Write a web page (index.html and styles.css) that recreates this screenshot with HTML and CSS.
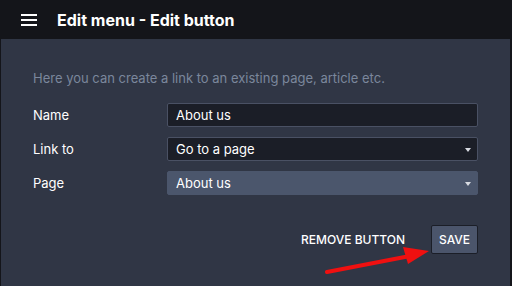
FILE: index.html
```html
<!DOCTYPE html>
<html lang="en">
<head>
  <meta charset="UTF-8">
  <title>Edit button</title>
  <link rel="stylesheet" href="styles.css">
</head>
<body>
  <header class="topbar">
    <span class="burger"><i></i><i></i><i></i></span>
    <h1 class="title">Edit menu - Edit button</h1>
  </header>

  <main class="panel">
    <p class="hint">Here you can create a link to an existing page, article etc.</p>

    <div class="row">
      <label class="label">Name</label>
      <div class="field">About us</div>
    </div>
    <div class="row">
      <label class="label">Link to</label>
      <div class="field select">Go to a page</div>
    </div>
    <div class="row">
      <label class="label">Page</label>
      <div class="field select light">About us</div>
    </div>

    <div class="actions">
      <button class="btn-text">REMOVE BUTTON</button>
      <button class="btn-save">SAVE</button>
    </div>

    <!-- annotation arrow -->
    <svg class="arrow" width="512" height="286" viewBox="0 0 512 286">
      <line x1="327" y1="272" x2="410" y2="256" stroke="#f01010" stroke-width="4" stroke-linecap="round"/>
      <polygon points="429,251 403,247 408,264" fill="#f01010"/>
    </svg>
  </main>
</body>
</html>
```

FILE: styles.css
```css
html, body{
  margin: 0;
  height: 100%;
  background: #14151a;
}
body{
  font-family: Inter, "Noto Sans", sans-serif;
  color: #fff;
  overflow: hidden;
}
.topbar{
  height: 39px;
  display: flex;
  align-items: center;
  padding-left: 21px;
  background: #14151a;
}
.burger{
  display: flex;
  flex-direction: column;
  gap: 3px;
  width: 16px;
  margin-right: 20px;
}
.burger i{
  display: block;
  height: 2px;
  background: #fff;
}
.title{
  margin: 0;
  font-size: 16px;
  font-weight: 700;
}
.panel{
  position: relative;
  height: 247px;
  margin: 0 2px 0 1px;
  padding: 31px 32px 0 32px;
  background: #303645;
  box-sizing: border-box;
}
.hint{
  margin: 0 0 17px;
  font-size: 13px;
  color: #7b879c;
}
.row{
  display: flex;
  align-items: center;
  margin-bottom: 10px;
}
.label{
  width: 134px;
  font-size: 13px;
}
.field{
  flex: 1;
  height: 24px;
  line-height: 22px;
  padding: 0 8px;
  box-sizing: border-box;
  font-size: 13px;
  background: #1b1e27;
  border: 1px solid #4a5164;
  border-radius: 2px;
  position: relative;
}
.field.light{
  background: #4b566c;
  border-color: #4b566c;
}
.select::after{
  content: '';
  position: absolute;
  right: 6px;
  top: 10px;
  border-left: 3px solid transparent;
  border-right: 3px solid transparent;
  border-top: 4px solid #d8dbe2;
}
.actions{
  display: flex;
  justify-content: flex-end;
  align-items: center;
  gap: 26px;
  margin-top: 30px;
}
.btn-text, .btn-save{
  font-family: inherit;
  font-size: 12px;
  font-weight: 500;
  color: #fff;
  cursor: pointer;
}
.btn-text{
  background: none;
  border: none;
  padding: 0;
}
.btn-save{
  width: 47px;
  height: 29px;
  padding: 0;
  background: #4b556b;
  border: 1px solid #1b1e27;
  border-radius: 2px;
}
.arrow{
  position: absolute;
  left: -1px;
  top: -39px;
  pointer-events: none;
}
```
